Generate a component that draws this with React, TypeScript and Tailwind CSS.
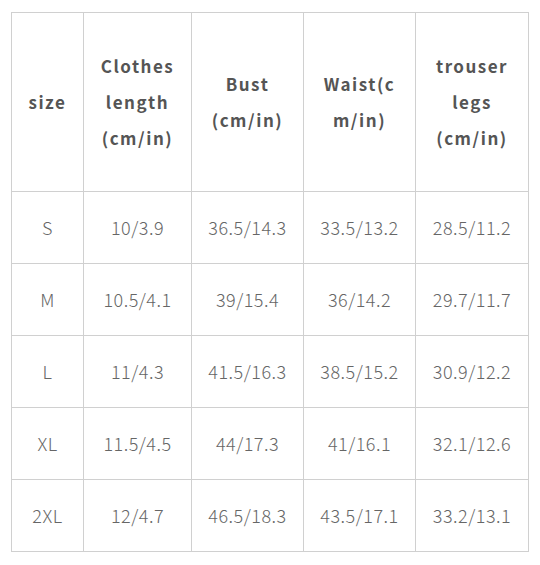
import React from "react";

const headers: string[][] = [
  ["size"],
  ["Clothes", "length", "(cm/in)"],
  ["Bust", "(cm/in)"],
  ["Waist(c", "m/in)"],
  ["trouser", "legs", "(cm/in)"],
];

const rows: string[][] = [
  ["S", "10/3.9", "36.5/14.3", "33.5/13.2", "28.5/11.2"],
  ["M", "10.5/4.1", "39/15.4", "36/14.2", "29.7/11.7"],
  ["L", "11/4.3", "41.5/16.3", "38.5/15.2", "30.9/12.2"],
  ["XL", "11.5/4.5", "44/17.3", "41/16.1", "32.1/12.6"],
  ["2XL", "12/4.7", "46.5/18.3", "43.5/17.1", "33.2/13.1"],
];

export default function App() {
  return (
    <div
      className="w-[540px] h-[565px] bg-white pl-[11px] pt-[12px]"
      style={{ fontFamily: '"Noto Sans CJK SC", "Noto Sans", sans-serif' }}
    >
      <div className="w-[518px] bg-[#d0d0d0] p-px">
        <div className="grid grid-cols-[71px_107px_111px_111px_112px] grid-rows-[178px_repeat(5,71px)] gap-px">
          {headers.map((lines, i) => (
            <div
              key={i}
              className="bg-white flex flex-col items-center justify-center text-[17px] font-bold text-[#555555] tracking-[1.5px] leading-[36px]"
            >
              {lines.map((l, j) => (
                <span key={j} className="block">
                  {l}
                </span>
              ))}
            </div>
          ))}
          {rows.flatMap((r, i) =>
            r.map((c, j) => (
              <div
                key={`${i}-${j}`}
                className="bg-white flex items-center justify-center text-[18px] font-light tracking-[0.5px] text-[#666666]"
              >
                {c}
              </div>
            ))
          )}
        </div>
      </div>
    </div>
  );
}
